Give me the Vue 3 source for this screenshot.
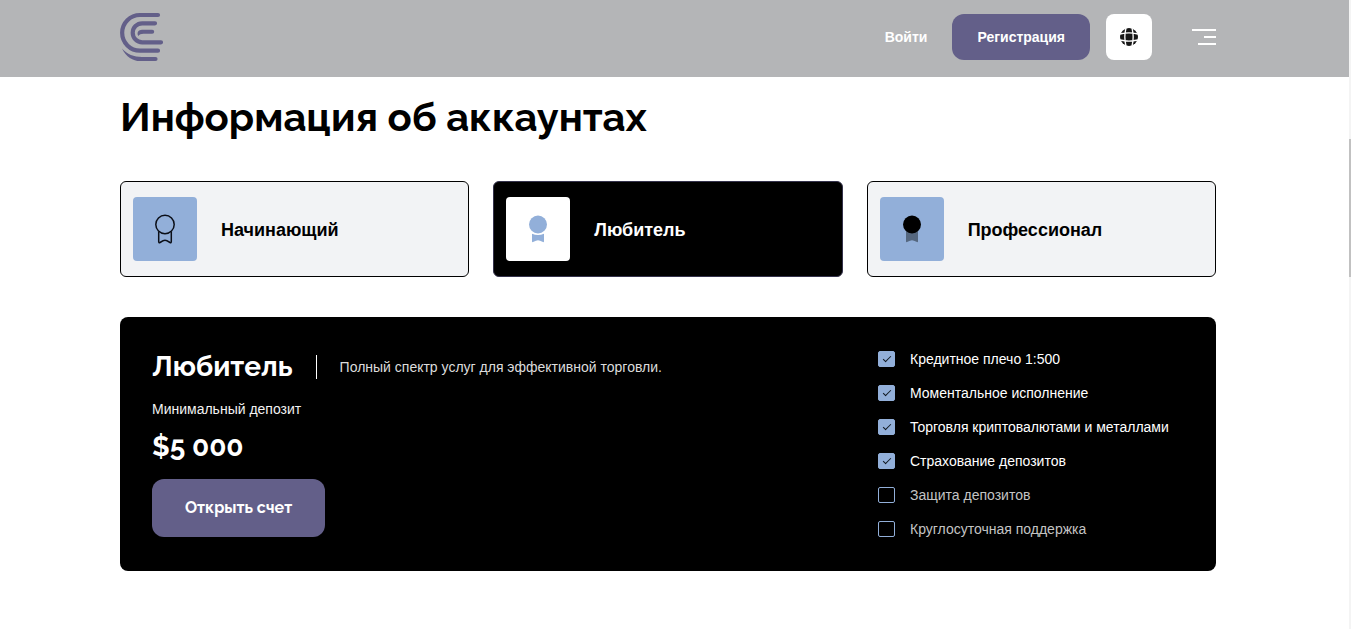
<script setup>
import { computed, ref } from 'vue'

const accounts = [
  { id: 'beginner', name: 'Начинающий' },
  { id: 'amateur', name: 'Любитель' },
  { id: 'pro', name: 'Профессионал' }
]
const active = ref('amateur')
const current = computed(() => accounts.find((a) => a.id === active.value))

const features = ref([
  { id: 'leverage', label: 'Кредитное плечо 1:500', on: true },
  { id: 'instant', label: 'Моментальное исполнение', on: true },
  { id: 'crypto', label: 'Торговля криптовалютами и металлами', on: true },
  { id: 'insurance', label: 'Страхование депозитов', on: true },
  { id: 'protection', label: 'Защита депозитов', on: false },
  { id: 'support', label: 'Круглосуточная поддержка', on: false }
])
</script>

<template>
  <div class="page">
    <header class="header">
      <div class="container header-row">
        <a class="logo" href="#" aria-label="Главная">
          <svg width="44" height="50" viewBox="0 0 44 50" fill="none">
            <g stroke="#635f89" stroke-width="4.2" stroke-linecap="round">
              <path d="M38 3H20A17.8 17.8 0 0 0 20 38.7H38" />
              <path d="M35 11.3H22.2A9.5 9.5 0 0 0 22.2 30.3H41" />
            </g>
            <path fill="#635f89" d="M18.3 24C16.4 20.5 18.6 17.7 22 17.7H32.2a2 2 0 0 1 0 4H23.5C21 21.7 19.4 22.4 18.3 24Z" />
            <path fill="#635f89" d="M2 36.5C6 45 13 49.1 20 49.1H35.5a2.1 2.1 0 0 0 0-4.2H22C14 44.9 7 42.5 2 36.5Z" />
          </svg>
        </a>
        <nav class="nav">
          <a class="login" href="#">Войти</a>
          <button class="register" type="button">Регистрация</button>
          <button class="lang" type="button" aria-label="Язык">
            <svg width="18" height="18" viewBox="0 0 18 18">
              <circle cx="9" cy="9" r="9" fill="#151515" />
              <g fill="none" stroke="#fff" stroke-width="1.3">
                <path d="M6 0C4.700 5 4.700 13 6 18M12 0C13.300 5 13.300 13 12 18M0 6C5 4.700 13 4.700 18 6M0 12C5 13.300 13 13.300 18 12" />
              </g>
            </svg>
          </button>
          <button class="menu" type="button" aria-label="Меню">
            <svg width="24" height="16" viewBox="0 0 24 16" fill="#fff">
              <path d="M0 0h24v2H0zM12 7h12v2H12zM6 14h18v2H6z" />
            </svg>
          </button>
        </nav>
      </div>
    </header>

    <main class="container">
      <h1 class="title">Информация об аккаунтах</h1>

      <div class="cards">
        <button
          v-for="a in accounts"
          :key="a.id"
          type="button"
          class="card"
          :class="{ active: a.id === active }"
          :aria-pressed="a.id === active"
          @click="active = a.id"
        >
          <span class="badge">
            <svg v-if="a.id === 'beginner'" width="32" height="32" viewBox="0 0 32 32" fill="none" stroke="#0b0f18" stroke-width="1.5" stroke-linejoin="round">
              <circle cx="16" cy="11.5" r="9.2" />
              <path d="M9.700 18.500V28.600q0 1.400 1.300 .9Q14.500 27.300 16 27.300T21 29.500q1.300 .5 1.300-.9V18.500" />
            </svg>
            <svg v-else-if="a.id === 'amateur'" width="32" height="32" viewBox="0 0 32 32" fill="#92afd9">
              <circle cx="16" cy="11.5" r="9" />
              <path d="M10 20.700q6 2.400 12 0V28.300q0 1.200-1 .8Q17.500 27.200 16 27.200T11 29.100q-1 .4-1-.8Z" />
            </svg>
            <svg v-else width="32" height="32" viewBox="0 0 32 32">
              <path fill="#55677f" d="M10 16H22V28.300q0 1.200-1 .8Q17.500 27.200 16 27.200T11 29.100q-1 .4-1-.8Z" />
              <circle cx="16" cy="11.5" r="9" />
            </svg>
          </span>
          <span class="card-name">{{ a.name }}</span>
        </button>
      </div>

      <section class="panel">
        <div class="info">
          <div class="info-head">
            <h2 class="name">{{ current.name }}</h2>
            <p class="desc">Полный спектр услуг для эффективной торговли.</p>
          </div>
          <p class="deposit-label">Минимальный депозит</p>
          <p class="deposit">$5 000</p>
          <button class="open" type="button">Открыть счет</button>
        </div>
        <ul class="features">
          <li v-for="f in features" :key="f.id" :class="{ off: !f.on }">
            <input :id="f.id" v-model="f.on" type="checkbox" />
            <label :for="f.id">{{ f.label }}</label>
          </li>
        </ul>
      </section>
    </main>

    <div class="scroll-track" aria-hidden="true"><div class="scroll-thumb"></div></div>
  </div>
</template>

<style>
body {
  margin: 0;
  background: #fff;
}
</style>

<style scoped>
.page {
  font-family: "Liberation Sans", Arial, sans-serif;
  font-size: 14px;
  line-height: 20px;
  color: #000;
}
.page *,
.page *::before {
  box-sizing: border-box;
}
button {
  font: inherit;
  border: 0;
  padding: 0;
  cursor: pointer;
}
h1, h2, p, ul {
  margin: 0;
  padding: 0;
}
.header {
  background: #b4b5b7;
  padding-right: 15px;
}
.container {
  max-width: 1096px;
  margin: 0 auto;
}
.page > .container {
  width: calc(100% - 15px);
  margin-left: max(0px, calc((100% - 15px - 1096px) / 2));
}
.header-row {
  display: flex;
  align-items: center;
  justify-content: space-between;
  padding: 12px 0 15px;
}
.logo {
  display: flex;
}
.nav {
  display: flex;
  align-items: center;
}
.login {
  color: #fff;
  font-weight: 700;
  text-decoration: none;
  margin-right: 25px;
}
.register {
  height: 46px;
  padding: 0 25px;
  border-radius: 12px;
  background: #635f89;
  color: #fff;
  font-weight: 700;
  margin-right: 16px;
}
.lang {
  width: 46px;
  height: 46px;
  border-radius: 8px;
  background: #fff;
  display: grid;
  place-items: center;
  margin-right: 40px;
}
.menu {
  display: flex;
  background: none;
}
.title {
  font-family: Raleway, Lato, "Open Sans", sans-serif;
  font-size: 40px;
  line-height: 48px;
  font-weight: 700;
  padding: 16px 0 40px;
}
.cards {
  display: grid;
  grid-template-columns: repeat(3, 1fr);
  gap: 24px;
}
.card {
  display: flex;
  align-items: center;
  gap: 24px;
  padding: 15px 12px;
  border: 1px solid #000;
  border-radius: 6px;
  background: #f2f3f5;
  color: #000;
  text-align: left;
}
.card.active {
  background: #000;
  border-color: #34324b;
  color: #fff;
}
.badge {
  width: 64px;
  height: 64px;
  border-radius: 4px;
  background: #92afd9;
  display: grid;
  place-items: center;
}
.active .badge {
  background: #fff;
}
.card-name {
  font-size: 18px;
  line-height: 22px;
  padding-top: 2px;
  font-weight: 700;
}
.panel {
  display: flex;
  justify-content: space-between;
  margin-top: 40px;
  padding: 32px;
  border-radius: 8px;
  background: #000;
  color: #fff;
}
.info-head {
  display: flex;
  align-items: center;
}
.name {
  font-family: Raleway, Lato, "Open Sans", sans-serif;
  font-size: 28px;
  line-height: 36px;
  font-weight: 700;
}
.desc {
  margin-left: 23px;
  padding: 2px 0 2px 23px;
  border-left: 1px solid #fff;
  color: #dcdcdc;
}
.deposit-label {
  margin-top: 14px;
  color: #f2f2f2;
}
.deposit {
  font-family: Raleway, Lato, "Open Sans", sans-serif;
  font-size: 28px;
  line-height: 36px;
  font-weight: 700;
  margin-top: 10px;
}
.open {
  height: 58px;
  margin-top: 14px;
  padding: 0 33px;
  border-radius: 12px;
  background: #635f89;
  color: #fff;
  font-family: Raleway, Lato, "Open Sans", sans-serif;
  font-size: 16px;
  font-weight: 700;
}
.features {
  list-style: none;
  width: 306px;
  display: flex;
  flex-direction: column;
  gap: 14px;
}
.features li {
  display: flex;
  align-items: center;
  gap: 15px;
}
.features .off {
  color: #c4c4c4;
}
.features input {
  appearance: none;
  width: 17px;
  height: 16px;
  margin: 0;
  border: 1px solid #92afd9;
  border-radius: 2px;
  display: grid;
  place-items: center;
}
.features input:checked {
  background: #92afd9;
}
.features input:checked::before {
  content: "";
  width: 8px;
  height: 4px;
  margin-bottom: 2px;
  border: solid #101820;
  border-width: 0 0 1px 1px;
  transform: rotate(-45deg);
}
.scroll-track {
  display: flow-root;
  position: fixed;
  top: 0;
  right: 0;
  bottom: 0;
  width: 2px;
  background: #f4f4f4;
}
.scroll-thumb {
  height: 22%;
  margin-top: 139px;
  background: #c1c1c1;
}
</style>
